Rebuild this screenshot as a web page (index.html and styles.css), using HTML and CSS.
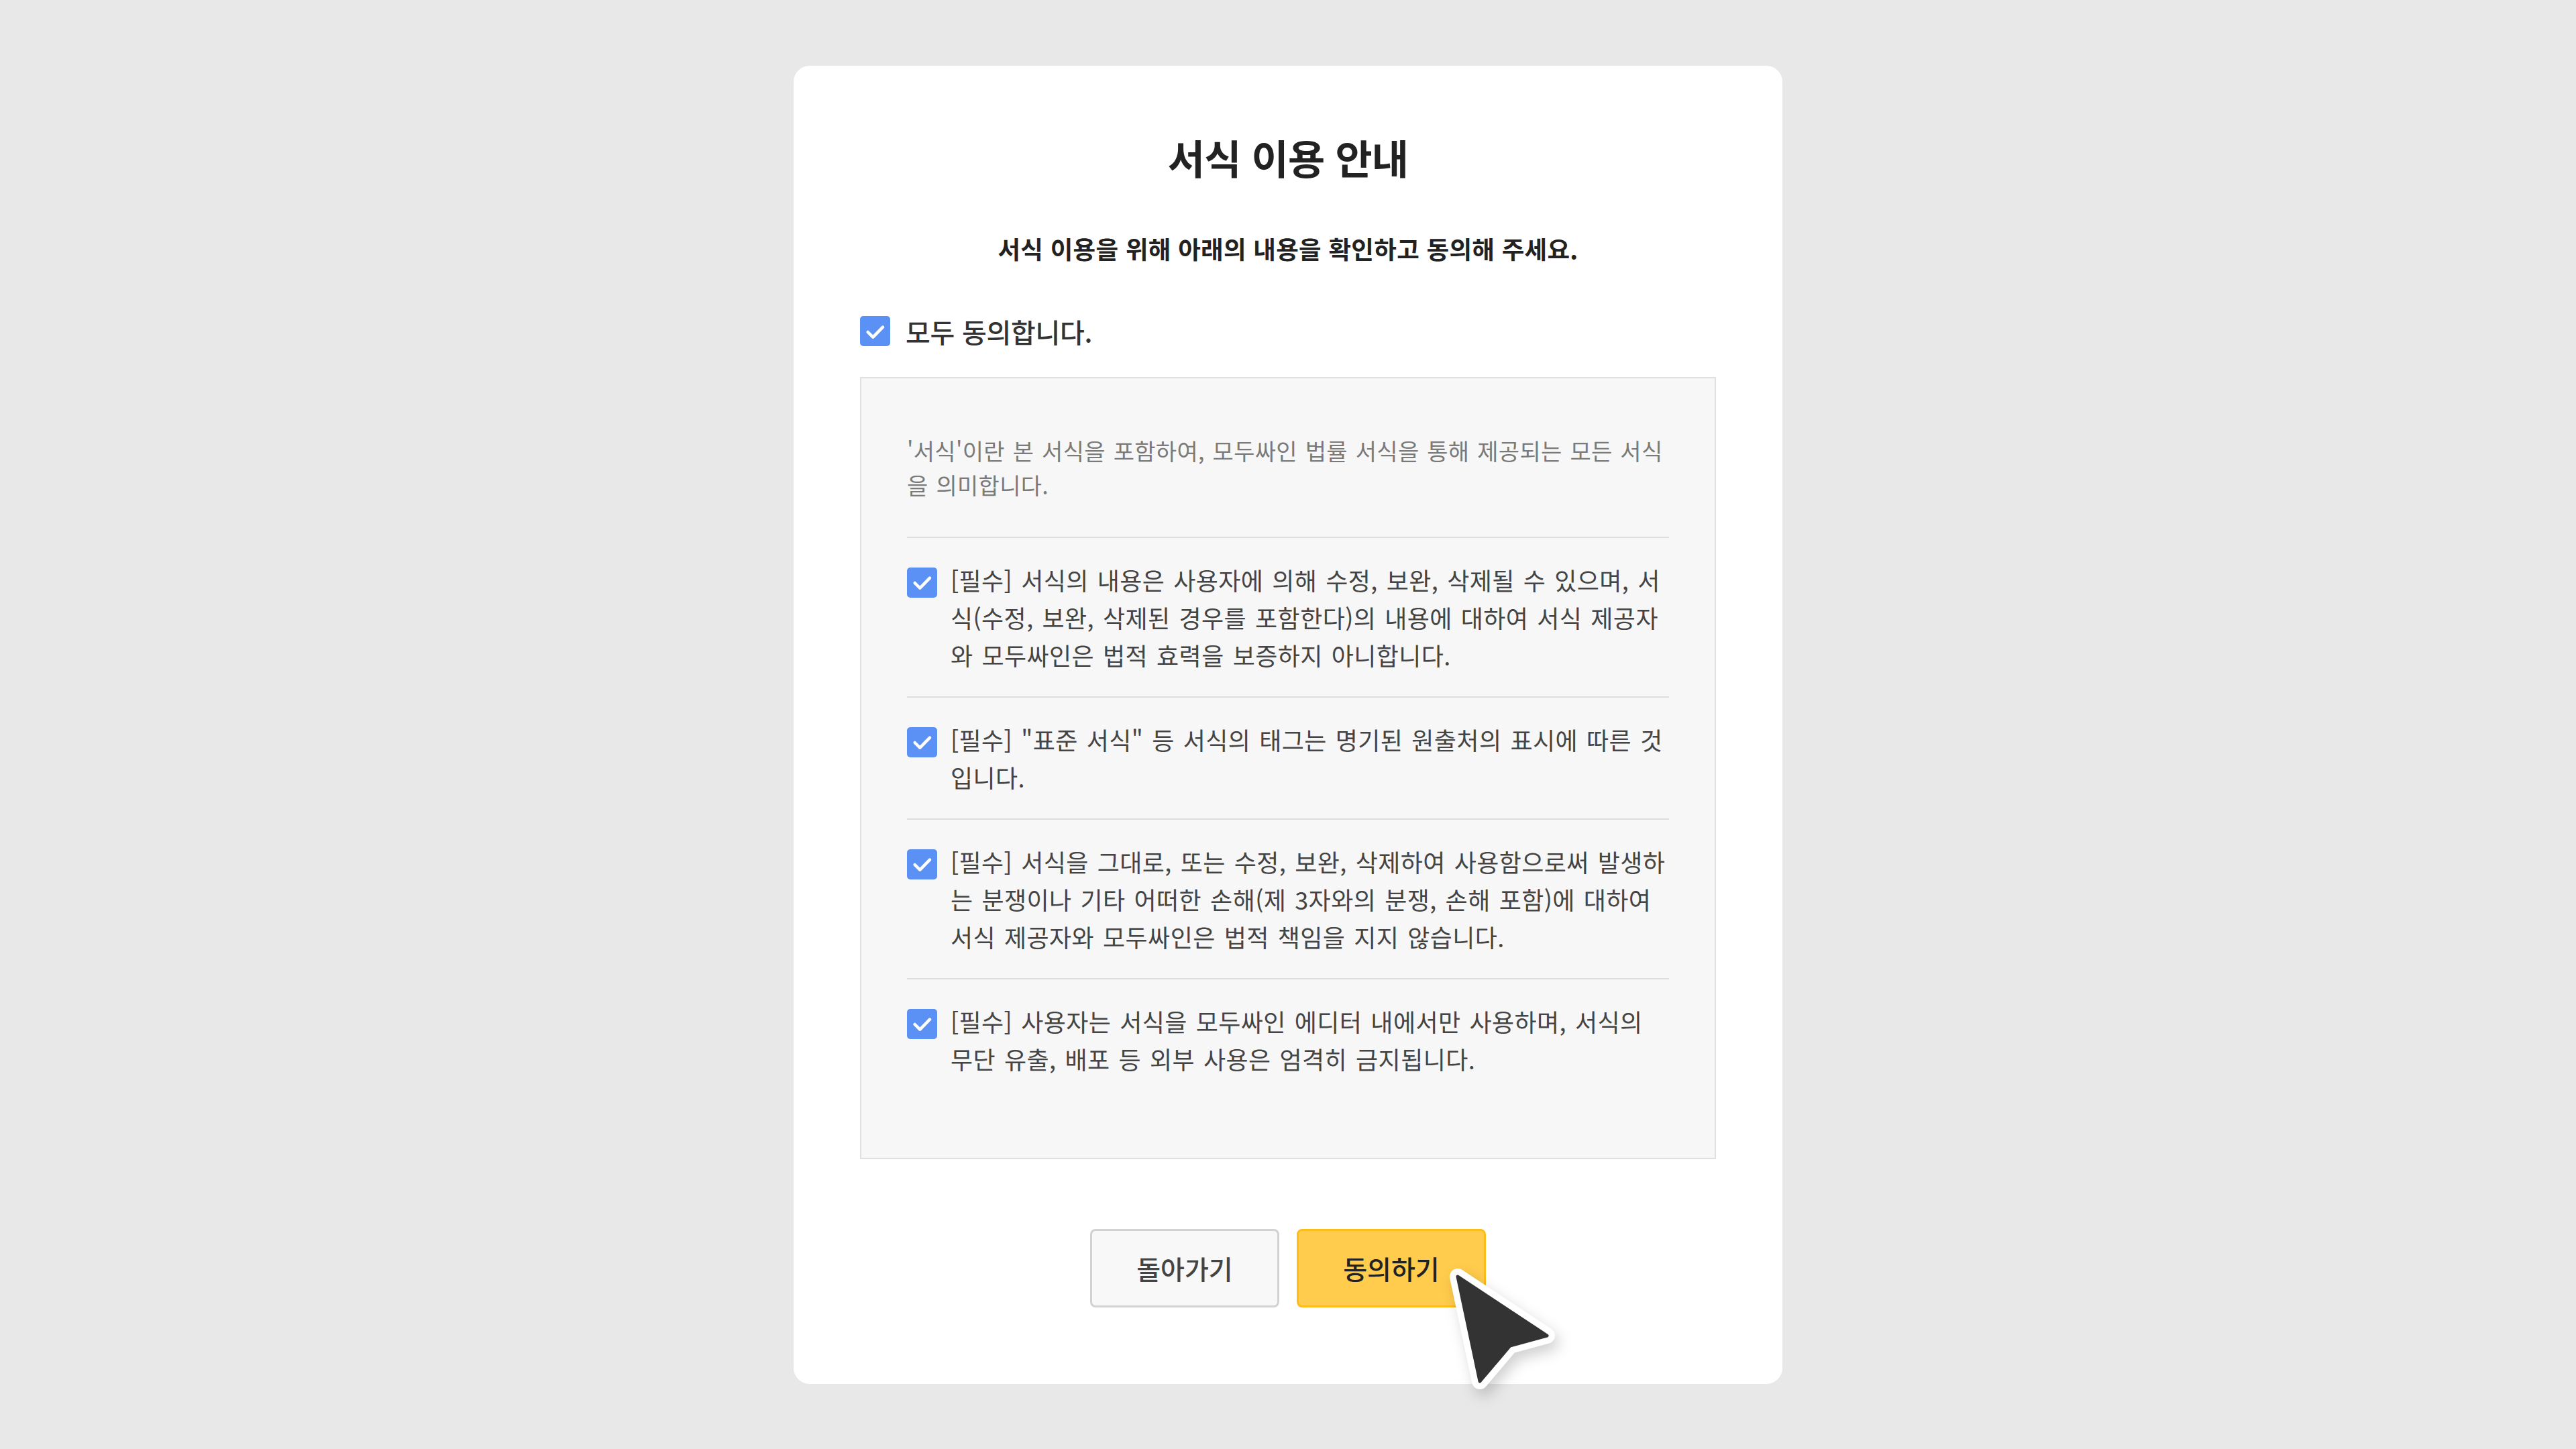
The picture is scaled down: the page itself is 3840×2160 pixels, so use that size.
FILE: index.html
```html
<!DOCTYPE html>
<html lang="ko">
<head>
<meta charset="utf-8">
<title>서식 이용 안내</title>
<link rel="stylesheet" href="styles.css">
</head>
<body>
  <main class="card">
    <h1 class="title">서식 이용 안내</h1>
    <p class="lead">서식 이용을 위해 아래의 내용을 확인하고 동의해 주세요.</p>

    <label class="agree-all">
      <span class="check">
        <svg viewBox="0 0 24 24"><path d="M5.2 12.6 L9.8 17.2 L18.6 8.2"/></svg>
      </span>
      <span class="agree-all-text">모두 동의합니다.</span>
    </label>

    <section class="terms">
      <p class="terms-intro">'서식'이란 본 서식을 포함하여, 모두싸인 법률 서식을 통해 제공되는 모든 서식을 의미합니다.</p>
      <ul class="terms-list">
        <li class="term">
          <span class="check">
            <svg viewBox="0 0 24 24"><path d="M5.2 12.6 L9.8 17.2 L18.6 8.2"/></svg>
          </span>
          <span class="term-text">[필수] 서식의 내용은 사용자에 의해 수정, 보완, 삭제될 수 있으며, 서식(수정, 보완, 삭제된 경우를 포함한다)의 내용에 대하여 서식 제공자와 모두싸인은 법적 효력을 보증하지 아니합니다.</span>
        </li>
        <li class="term">
          <span class="check">
            <svg viewBox="0 0 24 24"><path d="M5.2 12.6 L9.8 17.2 L18.6 8.2"/></svg>
          </span>
          <span class="term-text">[필수] "표준 서식" 등 서식의 태그는 명기된 원출처의 표시에 따른 것입니다.</span>
        </li>
        <li class="term">
          <span class="check">
            <svg viewBox="0 0 24 24"><path d="M5.2 12.6 L9.8 17.2 L18.6 8.2"/></svg>
          </span>
          <span class="term-text">[필수] 서식을 그대로, 또는 수정, 보완, 삭제하여 사용함으로써 발생하는 분쟁이나 기타 어떠한 손해(제 3자와의 분쟁, 손해 포함)에 대하여 서식 제공자와 모두싸인은 법적 책임을 지지 않습니다.</span>
        </li>
        <li class="term">
          <span class="check">
            <svg viewBox="0 0 24 24"><path d="M5.2 12.6 L9.8 17.2 L18.6 8.2"/></svg>
          </span>
          <span class="term-text">[필수] 사용자는 서식을 모두싸인 에디터 내에서만 사용하며, 서식의 무단 유출, 배포 등 외부 사용은 엄격히 금지됩니다.</span>
        </li>
      </ul>
    </section>

    <div class="actions">
      <button class="btn btn-back" type="button">돌아가기</button>
      <button class="btn btn-agree" type="button">동의하기</button>
      <svg class="pointer" viewBox="0 0 200 200">
        <path class="pointer-edge" d="M22 22 L155 110 L100 125 L55 178 Z"/>
        <path class="pointer-body" d="M22 22 L155 110 L100 125 L55 178 Z"/>
      </svg>
    </div>
  </main>
</body>
</html>
```

FILE: styles.css
```css
* {
  box-sizing: border-box;
}

html,
body {
  margin: 0;
  padding: 0;
}

body {
  min-height: 100vh;
  background: #e8e8e8;
  display: flex;
  align-items: center;
  justify-content: center;
  font-family: "Noto Sans CJK KR", "Noto Sans", sans-serif;
  color: #444;
}

.card {
  width: 1474px;
  background: #ffffff;
  border-radius: 24px;
  padding: 96px 99px 114px;
  display: flex;
  flex-direction: column;
}

.title {
  margin: 0;
  text-align: center;
  font-size: 60px;
  line-height: 80px;
  font-weight: 700;
  letter-spacing: -0.8px;
  color: #222;
}

.lead {
  margin: 72px 0 0;
  text-align: center;
  font-size: 36.5px;
  line-height: 50px;
  font-weight: 700;
  letter-spacing: 0.3px;
  color: #222;
}

.check {
  flex: none;
  width: 45px;
  height: 45px;
  border-radius: 5px;
  background: #5b91f4;
  display: flex;
  align-items: center;
  justify-content: center;
}

.check svg {
  width: 40px;
  height: 40px;
  fill: none;
  stroke: #ffffff;
  stroke-width: 2.7;
  stroke-linecap: round;
  stroke-linejoin: round;
}

.agree-all {
  margin: 73px 0 43px;
  height: 50px;
  display: flex;
  align-items: center;
  gap: 23px;
}

.agree-all-text {
  font-size: 40px;
  font-weight: 500;
  letter-spacing: -0.3px;
  color: #333;
}

.terms {
  background: #f7f7f7;
  border: 2px solid #e0e0e0;
  padding: 82px 68px 86px;
}

.terms-intro {
  margin: 0 0 52px;
  font-size: 34px;
  line-height: 51px;
  letter-spacing: 0.3px;
  word-spacing: 2px;
  color: #7a7a7a;
}

.terms-list {
  list-style: none;
  margin: 0;
  padding: 0;
}

.term {
  border-top: 2px solid #dedede;
  padding: 34px 0;
  display: flex;
  align-items: flex-start;
  gap: 20px;
}

.term .check {
  margin-top: 10px;
}

.term-text {
  flex: 1;
  margin-right: -1px;
  font-size: 36px;
  line-height: 56px;
  letter-spacing: 0.4px;
  word-spacing: 2.5px;
  color: #444;
}

.actions {
  margin-top: 104px;
  align-self: center;
  position: relative;
  display: flex;
  gap: 26px;
}

.btn {
  width: 282px;
  height: 117px;
  border-radius: 8px;
  font-family: inherit;
  font-size: 39px;
  font-weight: 500;
  padding: 0;
  cursor: pointer;
}

.btn-back {
  background: #f8f8f8;
  border: 3px solid #d2d2d2;
  color: #444;
}

.btn-agree {
  background: #ffcc4d;
  border: 3px solid #fbbd1c;
  color: #222;
}

/* mouse pointer resting over the agree button */
.pointer {
  position: absolute;
  left: 526px;
  top: 49px;
  width: 200px;
  height: 200px;
  overflow: visible;
  filter: drop-shadow(6px 10px 10px rgba(0, 0, 0, 0.18));
}

.pointer-edge {
  fill: #ffffff;
  stroke: #ffffff;
  stroke-width: 24;
  stroke-linejoin: round;
}

.pointer-body {
  fill: #333333;
  stroke: #333333;
  stroke-width: 5;
  stroke-linejoin: round;
}
```
